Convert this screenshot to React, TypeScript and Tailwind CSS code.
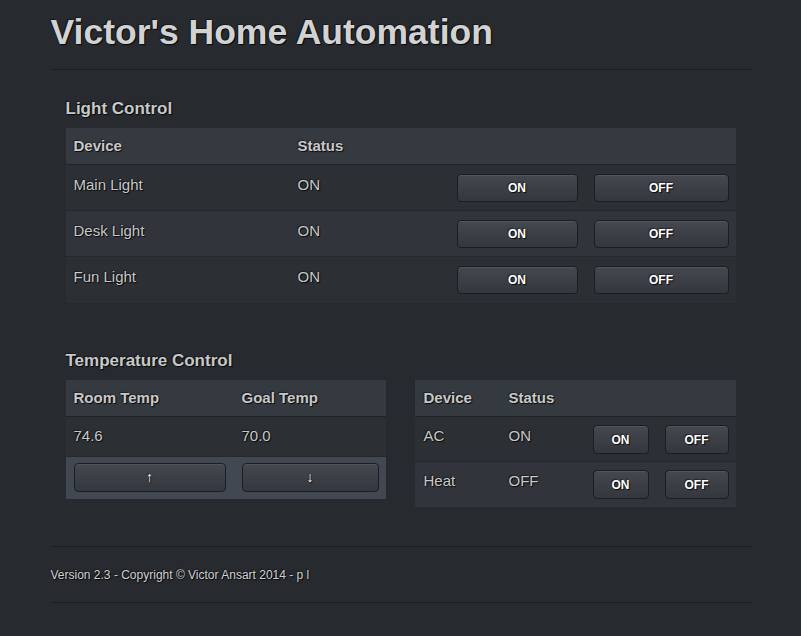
import React from "react";

const shadow = "[text-shadow:1px_1px_1px_rgba(0,0,0,0.85),-1px_-1px_1px_rgba(0,0,0,0.45)]";

const lights = [
  { name: "Main Light", status: "ON", bg: "bg-[#2c3035]" },
  { name: "Desk Light", status: "ON", bg: "bg-[#31353b]" },
  { name: "Fun Light", status: "ON", bg: "bg-[#2c3035]" },
];

const climate = [
  { name: "AC", status: "ON", bg: "bg-[#2c3035]" },
  { name: "Heat", status: "OFF", bg: "bg-[#31353b]" },
];

function Btn({ label, className }: { label: string; className: string }) {
  return (
    <button
      className={`${className} rounded-[4px] border border-[#1b1d21] bg-gradient-to-b from-[#44484f] to-[#34373d] text-[12px] font-bold text-white shadow-[inset_0_1px_0_rgba(255,255,255,0.08)] ${shadow}`}
    >
      {label}
    </button>
  );
}

export default function App() {
  return (
    <div className="min-h-[636px] bg-[#272b30] font-['Liberation_Sans',Arial,sans-serif] text-[#c8c8c8]">
      <div className="mx-auto w-[700px]">
        <h1 className={`pt-[12px] pb-[17px] text-[35.5px] leading-[40px] font-bold text-[#d2d2d2] ${shadow}`}>
          Victor's Home Automation
        </h1>
        <div className="h-px bg-[#1c1e22]" />

        <div className="px-[15px]">
          {/* Light control */}
          <h3 className={`mt-[29px] mb-[9px] text-[17px] leading-[20px] font-bold ${shadow}`}>Light Control</h3>
          <div className="bg-[#2c3035]">
            <div className={`flex h-[37px] items-center border-b border-[#1f2226] bg-[#353a41] text-[15px] font-bold ${shadow}`}>
              <span className="w-[232px] pl-[8px]">Device</span>
              <span>Status</span>
            </div>
            {lights.map((l) => (
              <div key={l.name} className={`flex h-[46px] border-b border-[#25282c] last:border-b-0 ${l.bg}`}>
                <span className={`w-[232px] pt-[11px] pl-[8px] text-[15px] leading-[18px] ${shadow}`}>{l.name}</span>
                <span className={`w-[159px] pt-[11px] text-[15px] leading-[18px] ${shadow}`}>{l.status}</span>
                <div className="flex gap-[16px] pt-[9px]">
                  <Btn label="ON" className="h-[28px] w-[121px]" />
                  <Btn label="OFF" className="h-[28px] w-[135px]" />
                </div>
              </div>
            ))}
          </div>

          {/* Temperature control */}
          <h3 className={`mt-[48px] mb-[9px] text-[17px] leading-[20px] font-bold ${shadow}`}>Temperature Control</h3>
          <div className="flex gap-[29px]">
            <div className="w-[320px]">
              <div className={`flex h-[37px] items-center border-b border-[#1f2226] bg-[#353a41] text-[15px] font-bold ${shadow}`}>
                <span className="w-[176px] pl-[8px]">Room Temp</span>
                <span>Goal Temp</span>
              </div>
              <div className={`flex h-[40px] border-b border-[#25282c] bg-[#2c3035] text-[15px] leading-[18px] ${shadow}`}>
                <span className="w-[176px] pt-[10px] pl-[8px]">74.6</span>
                <span className="pt-[10px]">70.0</span>
              </div>
              <div className="flex h-[42px] gap-[16px] bg-[#424851] pt-[6px] pl-[8px]">
                <Btn label="↑" className="h-[29px] w-[152px] text-[14px]" />
                <Btn label="↓" className="h-[29px] w-[137px] text-[14px]" />
              </div>
            </div>

            <div className="w-[321px] bg-[#2c3035]">
              <div className={`flex h-[37px] items-center border-b border-[#1f2226] bg-[#353a41] text-[15px] font-bold ${shadow}`}>
                <span className="w-[94px] pl-[9px]">Device</span>
                <span>Status</span>
              </div>
              {climate.map((c) => (
                <div key={c.name} className={`flex h-[45px] border-b border-[#25282c] last:border-b-0 ${c.bg}`}>
                  <span className={`w-[94px] pt-[10px] pl-[9px] text-[15px] leading-[18px] ${shadow}`}>{c.name}</span>
                  <span className={`w-[84px] pt-[10px] text-[15px] leading-[18px] ${shadow}`}>{c.status}</span>
                  <div className="flex gap-[16px] pt-[8px]">
                    <Btn label="ON" className="h-[29px] w-[56px]" />
                    <Btn label="OFF" className="h-[29px] w-[64px]" />
                  </div>
                </div>
              ))}
            </div>
          </div>
        </div>

        <div className="mt-[39px] h-px bg-[#1c1e22]" />
        <p className={`pt-[22px] pb-[20px] text-[12px] leading-[13px] text-[#cfcfcf] ${shadow}`}>
          Version 2.3 - Copyright © Victor Ansart 2014 - p l
        </p>
        <div className="h-px bg-[#1c1e22]" />
      </div>
    </div>
  );
}
